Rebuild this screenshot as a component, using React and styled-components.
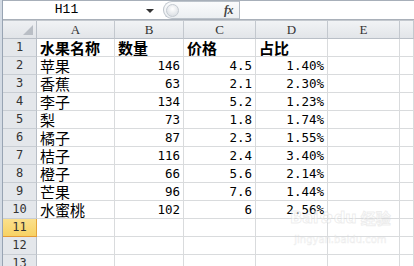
import React from "react";
import styled, { createGlobalStyle } from "styled-components";

const Global = createGlobalStyle`
  html, body { margin: 0; padding: 0; background: #ffffff; }
  body { width: 414px; height: 266px; overflow: hidden; }
`;

const Window = styled.div`
  position: relative;
  display: flex;
  width: 414px;
  height: 266px;
  overflow: hidden;
  background: #ffffff;
`;

const LeftStrip = styled.div`
  width: 2px;
  flex: none;
  background: #d4dbe4;
  border-right: 1px solid #98a4b3;
`;

const Main = styled.div`
  flex: 1;
  display: flex;
  flex-direction: column;
  min-width: 0;
`;

const TopBand = styled.div`
  height: 3px;
  background: #dfe3e9;
  border-bottom: 1px solid #a7afb9;
`;

const FormulaBar = styled.div`
  display: flex;
  align-items: stretch;
  height: 18px;
  background: #ffffff;
`;

const NameBox = styled.div`
  width: 155px;
  display: flex;
  align-items: center;
`;

const NameText = styled.span`
  flex: 1;
  text-align: center;
  padding-right: 16px;
  font-family: "Liberation Mono", monospace;
  font-size: 13px;
  color: #000;
  line-height: 18px;
`;

const DropArrow = styled.span`
  width: 0;
  height: 0;
  margin-right: 4px;
  border-left: 4px solid transparent;
  border-right: 4px solid transparent;
  border-top: 4px solid #333;
  margin-top: 2px;
`;

const Spacer = styled.div`
  width: 5px;
`;

const FxArea = styled.div`
  width: 76px;
  display: flex;
  align-items: center;
  justify-content: space-between;
  box-sizing: border-box;
  border: 1px solid #bcc3cb;
  border-right: none;
  border-radius: 9px 0 0 9px;
  background: linear-gradient(#fafbfc, #eceff2);
  padding: 0 6px 0 2px;
`;

const Knob = styled.span`
  width: 11px;
  height: 11px;
  border-radius: 50%;
  border: 1px solid #c4cad1;
  background: radial-gradient(circle at 50% 35%, #ffffff, #d3d8de);
`;

const Fx = styled.span`
  font-family: "Liberation Serif", serif;
  font-style: italic;
  font-weight: bold;
  font-size: 12px;
  color: #444;
  letter-spacing: -0.5px;
`;

const FormulaInput = styled.div`
  flex: 1;
  border-left: 1px solid #b3bac3;
  background: #fff;
`;

const Separator = styled.div`
  height: 3px;
  border-top: 1px solid #a9b0b9;
  border-bottom: 1px solid #c3c8ce;
  background: #eceef1;
`;

const Grid = styled.div`
  display: grid;
  grid-template-columns: 34px 78px 69px 72px 72px 72px 1fr;
  grid-auto-rows: 18px;
`;

const Corner = styled.div`
  position: relative;
  box-sizing: border-box;
  background: linear-gradient(#eef0f3, #e1e4e8);
  border-right: 1px solid #b9bfc7;
  border-bottom: 1px solid #b9bfc7;
  &::after {
    content: "";
    position: absolute;
    right: 3px;
    bottom: 3px;
    width: 0;
    height: 0;
    border-left: 10px solid transparent;
    border-bottom: 10px solid #b9bec5;
  }
`;

const ColHead = styled.div`
  box-sizing: border-box;
  display: flex;
  align-items: center;
  justify-content: center;
  background: linear-gradient(#f1f3f5, #e2e5e9);
  border-right: 1px solid #c3c8ce;
  border-bottom: 1px solid #b9bfc7;
  font-family: "Liberation Serif", serif;
  font-size: 13px;
  line-height: 17px;
  color: #333;
`;

const RowHead = styled.div`
  box-sizing: border-box;
  display: flex;
  align-items: center;
  justify-content: center;
  background: ${(p) => (p.$active ? "linear-gradient(#fbe08c, #f7d264)" : "#e4e7eb")};
  border-right: 1px solid ${(p) => (p.$active ? "#e2a43c" : "#b9bfc7")};
  border-bottom: 1px solid ${(p) => (p.$active ? "#e59a36" : "#c8cdd3")};
  font-family: "DejaVu Sans Mono", monospace;
  font-size: 12px;
  line-height: 17px;
  color: #333;
`;

const Cell = styled.div`
  box-sizing: border-box;
  display: flex;
  align-items: center;
  justify-content: ${(p) => (p.$num ? "flex-end" : "flex-start")};
  padding: ${(p) => (p.$num ? "1px 3px 0 0" : "1px 0 0 3px")};
  border-right: 1px solid #d9dbdd;
  border-bottom: 1px solid #d9dbdd;
  font-family: ${(p) =>
    p.$num
      ? '"DejaVu Sans Mono", monospace'
      : '"Noto Sans CJK SC", "Noto Sans", sans-serif'};
  font-size: ${(p) => (p.$num ? "12.5px" : "15px")};
  font-weight: ${(p) => (p.$bold ? 700 : 400)};
  line-height: 16px;
  color: #000;
  white-space: nowrap;
`;

const Watermark = styled.div`
  position: absolute;
  left: 290px;
  top: 208px;
  display: flex;
  flex-direction: column;
  align-items: center;
  white-space: nowrap;
  pointer-events: none;
  color: rgba(255, 255, 255, 0.5);
  -webkit-text-stroke: 1px rgba(205, 205, 205, 0.35);
`;

const WmLogo = styled.div`
  font-family: "DejaVu Sans", sans-serif;
  font-weight: bold;
  font-size: 16px;
  line-height: 20px;
  display: flex;
  align-items: center;
  gap: 1px;
`;

const WmCjk = styled.span`
  font-family: "Noto Sans CJK SC", sans-serif;
  font-size: 15px;
  margin-left: 3px;
`;

const WmUrl = styled.div`
  font-family: "DejaVu Sans", sans-serif;
  font-size: 10px;
  line-height: 12px;
  margin-top: 6px;
  -webkit-text-stroke: 0.6px rgba(205, 205, 205, 0.35);
`;

const cols = ["A", "B", "C", "D", "E", ""];

const data = [
  ["水果名称", "数量", "价格", "占比"],
  ["苹果", "146", "4.5", "1.40%"],
  ["香蕉", "63", "2.1", "2.30%"],
  ["李子", "134", "5.2", "1.23%"],
  ["梨", "73", "1.8", "1.74%"],
  ["橘子", "87", "2.3", "1.55%"],
  ["桔子", "116", "2.4", "3.40%"],
  ["橙子", "66", "5.6", "2.14%"],
  ["芒果", "96", "7.6", "1.44%"],
  ["水蜜桃", "102", "6", "2.56%"],
  [],
  [],
  [],
];

export default function App() {
  return (
    <>
      <Global />
      <Window>
        <LeftStrip />
        <Main>
          <TopBand />
          <FormulaBar>
            <NameBox>
              <NameText>H11</NameText>
              <DropArrow />
            </NameBox>
            <Spacer />
            <FxArea>
              <Knob />
              <Fx>fx</Fx>
            </FxArea>
            <FormulaInput />
          </FormulaBar>
          <Separator />
          <Grid>
            <Corner />
            {cols.map((c, i) => (
              <ColHead key={i}>{c}</ColHead>
            ))}
            {data.map((row, r) => (
              <React.Fragment key={r}>
                <RowHead $active={r + 1 === 11}>{r + 1}</RowHead>
                {[0, 1, 2, 3, 4, 5].map((ci) => {
                  const v = row[ci] ?? "";
                  const isHeader = r === 0;
                  const num = !isHeader && ci > 0 && ci < 4;
                  return (
                    <Cell key={ci} $num={num} $bold={isHeader}>
                      {v}
                    </Cell>
                  );
                })}
              </React.Fragment>
            ))}
          </Grid>
        </Main>
        <Watermark>
          <WmLogo>
            <span>Bai</span>
            <span>✿</span>
            <span>du</span>
            <WmCjk>经验</WmCjk>
          </WmLogo>
          <WmUrl>jingyan.baidu.com</WmUrl>
        </Watermark>
      </Window>
    </>
  );
}
